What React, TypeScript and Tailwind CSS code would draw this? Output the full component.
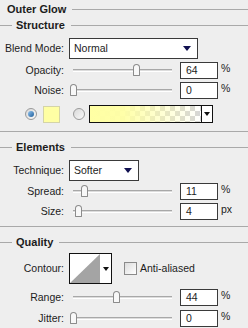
import React from 'react';

const font = { fontFamily: '"Liberation Sans", Arial, sans-serif' };

function SectionHeader({ title, lead }: { title: string; lead?: boolean }) {
  return (
    <div className="flex items-center h-full">
      {lead ? <div className="w-[12px] h-px bg-[#a9a9a9]" /> : <div className="w-[7px]" />}
      <span className={`font-bold text-[11px] text-[#1c1c1c] ${lead ? 'ml-[4px]' : ''}`}>{title}</span>
      <div className="flex-1 h-px bg-[#a9a9a9] ml-[6px]" />
    </div>
  );
}

function Select({ value, width }: { value: string; width: string }) {
  return (
    <div className={`${width} h-full bg-white border border-[#3a3a3a] flex items-center pl-[4px] pr-[6px]`}>
      <span className="flex-1 text-[10.5px] text-[#1c1c1c]">{value}</span>
      <svg width="8" height="5" viewBox="0 0 8 5">
        <path d="M0 0h8L4 5z" fill="#101050" />
      </svg>
    </div>
  );
}

function SliderRow({ label, value, pct, unit }: { label: string; value: string; pct: number; unit: string }) {
  return (
    <div className="flex items-center h-[17px]">
      <div className="w-[64px] text-right text-[10.5px] text-[#1c1c1c]">{label}</div>
      <div className="relative w-[99px] h-full ml-[9px]">
        <div className="absolute left-0 right-0 top-[7px] h-[3px] border-t border-[#a8a8a8] border-b border-b-white bg-[#dcdcdc]" />
        <div
          className="absolute top-[2px] w-[7px] h-[12px] bg-[#f8f8f8] border border-[#8c8c8c] rounded-t-[4px] rounded-b-[1px]"
          style={{ left: `${pct * 0.98 - 3}px` }}
        />
      </div>
      <div className="w-[38px] h-full ml-[8px] bg-white border border-[#3a3a3a] flex items-center pl-[5px] text-[10.5px] text-[#1c1c1c]">
        {value}
      </div>
      <span className="ml-[3px] -mt-[3px] text-[10.5px] text-[#1c1c1c]">{unit}</span>
    </div>
  );
}

function Radio({ on }: { on?: boolean }) {
  return (
    <div className="w-[12px] h-[12px] rounded-full border border-[#9a9a9a] bg-gradient-to-br from-[#d8d8d8] to-[#fafafa] flex items-center justify-center">
      {on && <div className="w-[6px] h-[6px] rounded-full bg-gradient-to-br from-[#8fc4f0] to-[#1f5f9a]" />}
    </div>
  );
}

function GradientSwatch() {
  return (
    <svg width="111" height="16" viewBox="0 0 111 16">
      <defs>
        <pattern id="chk" width="10" height="10" patternUnits="userSpaceOnUse">
          <rect width="10" height="10" fill="#ffffff" />
          <rect width="5" height="5" fill="#d6d6d6" />
          <rect x="5" y="5" width="5" height="5" fill="#d6d6d6" />
        </pattern>
        <linearGradient id="fade" x1="0" x2="1" y1="0" y2="0">
          <stop offset="0" stopColor="#ffffa4" stopOpacity="1" />
          <stop offset="0.3" stopColor="#ffffa4" stopOpacity="0.95" />
          <stop offset="1" stopColor="#ffffa4" stopOpacity="0" />
        </linearGradient>
      </defs>
      <rect width="111" height="16" fill="url(#chk)" />
      <rect width="111" height="16" fill="url(#fade)" />
    </svg>
  );
}

export default function App() {
  return (
    <div className="w-[248px] h-[328px] bg-[#eeeeee] overflow-hidden" style={font}>
      <div className="h-[19px]">
        <SectionHeader title="Outer Glow" />
      </div>
      <div className="h-[12px]">
        <SectionHeader title="Structure" lead />
      </div>

      <div className="flex items-center h-[21px] mt-[7px]">
        <div className="w-[64px] text-right text-[10.5px] text-[#1c1c1c]">Blend Mode:</div>
        <div className="ml-[5px] h-full">
          <Select value="Normal" width="w-[129px]" />
        </div>
      </div>

      <div className="mt-[3px]">
        <SliderRow label="Opacity:" value="64" pct={64} unit="%" />
      </div>
      <div className="mt-[3px]">
        <SliderRow label="Noise:" value="0" pct={0} unit="%" />
      </div>

      <div className="flex items-center h-[18px] mt-[6px]">
        <div className="ml-[25px]">
          <Radio on />
        </div>
        <div className="ml-[6px] w-[17px] h-[17px] bg-[#ffffa4] border border-[#d4d4a8]" />
        <div className="ml-[13px]">
          <Radio />
        </div>
        <div className="ml-[4px] flex h-full border border-[#111111] bg-white">
          <GradientSwatch />
          <div className="w-[11px] border-l border-[#111111] flex items-center justify-center">
            <svg width="6" height="4" viewBox="0 0 6 4">
              <path d="M0 0h6L3 4z" fill="#111111" />
            </svg>
          </div>
        </div>
      </div>

      <div className="mt-[8px] h-px bg-[#a9a9a9]" />

      <div className="h-[14px] mt-[8px]">
        <SectionHeader title="Elements" lead />
      </div>

      <div className="flex items-center h-[21px] mt-[6px]">
        <div className="w-[64px] text-right text-[10.5px] text-[#1c1c1c]">Technique:</div>
        <div className="ml-[5px] h-full">
          <Select value="Softer" width="w-[70px]" />
        </div>
      </div>

      <div className="mt-[2px]">
        <SliderRow label="Spread:" value="11" pct={11} unit="%" />
      </div>
      <div className="mt-[3px]">
        <SliderRow label="Size:" value="4" pct={5} unit="px" />
      </div>

      <div className="mt-[6px] h-px bg-[#a9a9a9]" />

      <div className="h-[14px] mt-[8px]">
        <SectionHeader title="Quality" lead />
      </div>

      <div className="flex items-center h-[31px] mt-[4px]">
        <div className="w-[64px] text-right text-[10.5px] text-[#1c1c1c]">Contour:</div>
        <div className="ml-[5px] w-[43px] h-full border border-[#111111] bg-white flex">
          <svg width="30" height="29" viewBox="0 0 30 29">
            <path d="M0 29L30 0V29z" fill="#a4a4a4" />
          </svg>
          <div className="flex-1 flex items-center justify-center">
            <svg width="6" height="4" viewBox="0 0 6 4">
              <path d="M0 0h6L3 4z" fill="#111111" />
            </svg>
          </div>
        </div>
        <div className="ml-[12px] w-[13px] h-[13px] border border-[#8a8a8a] bg-gradient-to-br from-[#dcdcdc] to-[#ffffff]" />
        <span className="ml-[3px] text-[10.5px] text-[#1c1c1c]">Anti-aliased</span>
      </div>

      <div className="mt-[5px]">
        <SliderRow label="Range:" value="44" pct={44} unit="%" />
      </div>
      <div className="mt-[4px]">
        <SliderRow label="Jitter:" value="0" pct={0} unit="%" />
      </div>
    </div>
  );
}
